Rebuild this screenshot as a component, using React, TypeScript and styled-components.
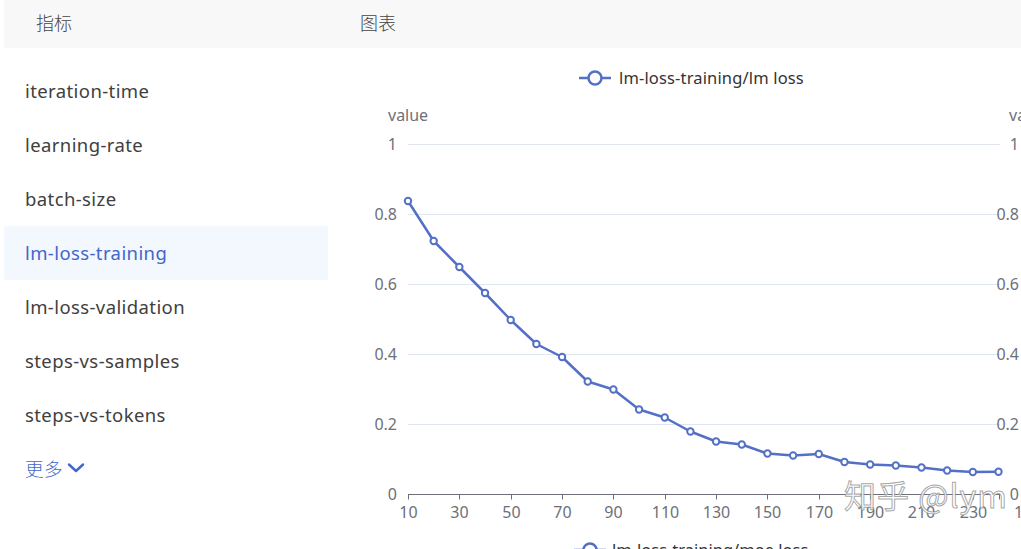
import React from "react";
import styled, { createGlobalStyle } from "styled-components";

const Global = createGlobalStyle`
  html, body { margin: 0; padding: 0; background: #ffffff; }
  body {
    font-family: "Noto Sans", "Noto Sans CJK SC", sans-serif;
    overflow: hidden;
  }
`;

const Page = styled.div`
  width: 1021px;
  height: 549px;
  display: flex;
  flex-direction: column;
  overflow: hidden;
`;

const Header = styled.div`
  height: 48px;
  margin-left: 4px;
  background: #f8f8f8;
  display: flex;
  align-items: center;
  flex-shrink: 0;
`;

const HeaderCell = styled.div<{ $w?: number }>`
  width: ${(p) => (p.$w ? `${p.$w}px` : "auto")};
  flex: ${(p) => (p.$w ? "none" : 1)};
  padding-left: 32px;
  padding-bottom: 5px;
  box-sizing: border-box;
  font-size: 18px;
  font-weight: 300;
  color: #444;
  font-family: "Noto Sans CJK SC", sans-serif;
`;

const Body = styled.div`
  flex: 1;
  display: flex;
`;

const Sidebar = styled.div`
  width: 324px;
  margin-left: 4px;
  padding-top: 16px;
  display: flex;
  flex-direction: column;
  flex-shrink: 0;
`;

const Item = styled.div<{ $active?: boolean }>`
  height: 54px;
  display: flex;
  align-items: center;
  padding-left: 21px;
  padding-bottom: 2px;
  box-sizing: border-box;
  font-size: 18.5px;
  letter-spacing: 0.4px;
  color: ${(p) => (p.$active ? "#4366c9" : "#404040")};
  background: ${(p) => (p.$active ? "#f2f8fe" : "transparent")};
  border-radius: 2px;
`;

const More = styled(Item)`
  color: #4366c9;
  gap: 4px;
  font-weight: 300;
  font-family: "Noto Sans CJK SC", sans-serif;
`;

const ChartArea = styled.div`
  flex: 1;
  position: relative;
`;

const Chart = styled.svg`
  display: block;
  font-family: "Noto Sans", "Noto Sans CJK SC", sans-serif;
`;

const items = [
  "iteration-time",
  "learning-rate",
  "batch-size",
  "lm-loss-training",
  "lm-loss-validation",
  "steps-vs-samples",
  "steps-vs-tokens",
];

const ys = [201, 241, 267, 293, 320, 344, 357, 381.5, 389.5, 409.5, 417.5, 431.5, 441.5, 444.5, 453.5, 455.5, 454, 462, 464.5, 465.5, 467.5, 470.5, 472, 471.8];

const X0 = 408;
const X1 = 998.5;
const step = (X1 - X0) / 23;
const gridY = [144.5, 214.5, 284.5, 354.5, 424.5];
const labels = ["1", "0.8", "0.6", "0.4", "0.2"];
const blue = "#5470c6";
const axis = "#6e7079";
const fs = 16;

function LineChart() {
  const pts = ys.map((y, i) => [X0 + i * step, y] as const);
  const d = pts.map((p, i) => `${i ? "L" : "M"}${p[0].toFixed(1)},${p[1]}`).join(" ");
  return (
    <Chart width={693} height={501} viewBox="328 48 693 501">
      {/* legend top */}
      <line x1={579} y1={78} x2={611} y2={78} stroke={blue} strokeWidth={2.5} />
      <circle cx={595} cy={78} r={6.5} fill="#fff" stroke={blue} strokeWidth={2.5} />
      <text x={619} y={84} fontSize={16.5} fill="#333" letterSpacing={0.15}>lm-loss-training/lm loss</text>

      {/* axis names */}
      <text x={388} y={121} fontSize={fs} fill={axis}>value</text>
      <text x={1009} y={121} fontSize={fs} fill={axis}>value</text>

      {/* grid */}
      {gridY.map((y, i) => (
        <g key={y}>
          <line x1={X0} y1={y} x2={1000} y2={y} stroke="#e0e6f1" strokeWidth={1} />
          <text x={397} y={y + 5.5} fontSize={fs} fill={axis} textAnchor="end">{labels[i]}</text>
          <text x={1019} y={y + 5.5} fontSize={fs} fill={axis} textAnchor="end">{labels[i]}</text>
        </g>
      ))}
      <text x={397} y={500} fontSize={fs} fill={axis} textAnchor="end">0</text>
      <text x={1019} y={500} fontSize={fs} fill={axis} textAnchor="end">0</text>

      {/* x axis */}
      <line x1={X0} y1={494.5} x2={1000} y2={494.5} stroke={axis} strokeWidth={1} />
      {Array.from({ length: 12 }, (_, k) => {
        const x = Math.round(X0 + k * 2 * step) + 0.5;
        return (
          <g key={k}>
            <line x1={x} y1={494.5} x2={x} y2={499.5} stroke={axis} strokeWidth={1} />
            <text x={x} y={518} fontSize={fs} fill={axis} textAnchor="middle">{10 + k * 20}</text>
          </g>
        );
      })}
      <line x1={999.5} y1={494.5} x2={999.5} y2={499.5} stroke={axis} strokeWidth={1} />
      <text x={1014} y={518} fontSize={fs} fill={axis}>10</text>

      {/* series */}
      <path d={d} fill="none" stroke={blue} strokeWidth={2.5} strokeLinejoin="round" />
      {pts.map((p, i) => (
        <circle key={i} cx={p[0]} cy={p[1]} r={3.2} fill="#fff" stroke={blue} strokeWidth={2} />
      ))}

      {/* watermark */}
      <text
        x={844}
        y={508}
        fontSize={32}
        letterSpacing={1}
        fill="#ffffff"
        fillOpacity={0.85}
        stroke="#8a8a8a"
        strokeOpacity={0.75}
        strokeWidth={1}
        fontFamily='"Noto Sans CJK SC", sans-serif'
      >
        知乎 @lym
      </text>

      {/* legend bottom (cut off) */}
      <line x1={574} y1={550} x2={606} y2={550} stroke={blue} strokeWidth={2.5} />
      <circle cx={590} cy={550} r={6.5} fill="#fff" stroke={blue} strokeWidth={2.5} />
      <text x={612} y={556} fontSize={16.5} fill="#333">lm-loss-training/moe loss</text>
    </Chart>
  );
}

export default function App() {
  return (
    <Page>
      <Global />
      <Header>
        <HeaderCell $w={324}>指标</HeaderCell>
        <HeaderCell>图表</HeaderCell>
      </Header>
      <Body>
        <Sidebar>
          {items.map((t) => (
            <Item key={t} $active={t === "lm-loss-training"}>{t}</Item>
          ))}
          <More>
            更多
            <svg width="18" height="12" viewBox="0 0 18 12">
              <path d="M2 2.5 L9 9 L16 2.5" fill="none" stroke="#4366c9" strokeWidth="2.4" strokeLinecap="round" strokeLinejoin="round" />
            </svg>
          </More>
        </Sidebar>
        <ChartArea>
          <LineChart />
        </ChartArea>
      </Body>
    </Page>
  );
}
